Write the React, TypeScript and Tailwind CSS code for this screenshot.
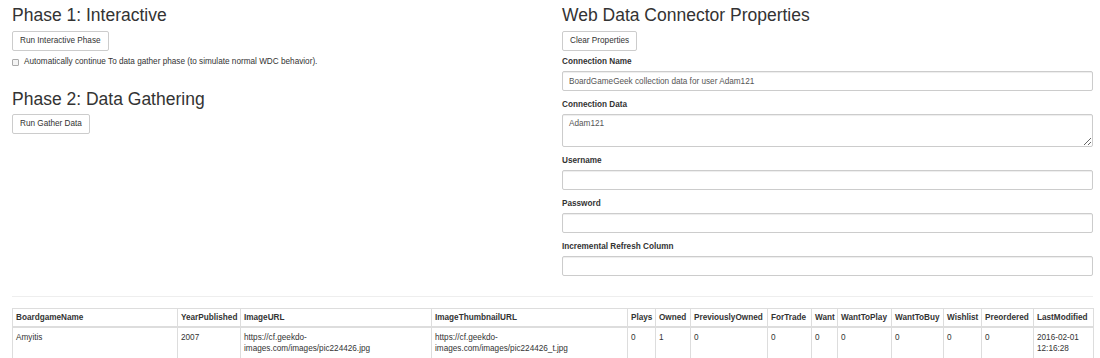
const columns = [
  { name: 'BoardgameName', w: 'w-[165px]' },
  { name: 'YearPublished', w: 'w-[63px]' },
  { name: 'ImageURL', w: 'w-[191px]' },
  { name: 'ImageThumbnailURL', w: 'w-[196px]' },
  { name: 'Plays', w: 'w-[28px]' },
  { name: 'Owned', w: 'w-[35px]' },
  { name: 'PreviouslyOwned', w: 'w-[77px]' },
  { name: 'ForTrade', w: 'w-[44px]' },
  { name: 'Want', w: 'w-[26px]' },
  { name: 'WantToPlay', w: 'w-[54px]' },
  { name: 'WantToBuy', w: 'w-[52px]' },
  { name: 'Wishlist', w: 'w-[38px]' },
  { name: 'Preordered', w: 'w-[52px]' },
  { name: 'LastModified', w: 'w-[60px]' },
];

const row: React.ReactNode[] = [
  'Amyitis',
  '2007',
  <>https://cf.geekdo-<br />images.com/images/pic224426.jpg</>,
  <>https://cf.geekdo-<br />images.com/images/pic224426_t.jpg</>,
  '0',
  '1',
  '0',
  '0',
  '0',
  '0',
  '0',
  '0',
  '0',
  <>2016-02-01<br />12:16:28</>,
];

const fields = [
  { label: 'Connection Name', value: 'BoardGameGeek collection data for user Adam121' },
  { label: 'Connection Data', value: 'Adam121', area: true },
  { label: 'Username', value: '' },
  { label: 'Password', value: '' },
  { label: 'Incremental Refresh Column', value: '' },
];

function Btn({ children }: { children: React.ReactNode }) {
  return (
    <button className="h-[20px] px-[7px] bg-white border border-[#ccc] rounded-[2px] text-[8.2px] leading-[12px] text-[#333]">
      {children}
    </button>
  );
}

export default function App() {
  return (
    <div className="min-h-screen bg-white pl-[12px] pr-[7px] text-[8.2px] text-[#333] font-['Liberation_Sans',Arial,sans-serif]">
      <div className="grid grid-cols-2 gap-[19px]">
        {/* Left: phases */}
        <div>
          <h2 className="mt-[6px] mb-[6px] text-[17.5px] leading-[19px] font-normal">Phase 1: Interactive</h2>
          <Btn>Run Interactive Phase</Btn>
          <label className="mt-[5px] flex items-center gap-[5px] leading-[12px]">
            <span className="w-[7px] h-[7px] border border-[#aaa] rounded-[1px] bg-[#f4f4f4]" />
            Automatically continue To data gather phase (to simulate normal WDC behavior).
          </label>
          <h2 className="mt-[22px] mb-[5px] text-[17.5px] leading-[19px] font-normal">Phase 2: Data Gathering</h2>
          <Btn>Run Gather Data</Btn>
        </div>

        {/* Right: properties */}
        <div>
          <h2 className="mt-[6px] mb-[6px] text-[17.5px] leading-[19px] font-normal">Web Data Connector Properties</h2>
          <Btn>Clear Properties</Btn>
          <div className="mt-[5px] flex flex-col gap-[8px]">
            {fields.map(f => (
              <div key={f.label}>
                <p className="mb-[3px] font-bold leading-[12px]">{f.label}</p>
                {f.area ? (
                  <textarea
                    readOnly
                    defaultValue={f.value}
                    className="block w-full h-[33px] px-[6px] py-[3px] border border-[#ccc] rounded-[2px] text-[8.2px] leading-[12px] text-[#555] shadow-[inset_0_1px_1px_rgba(0,0,0,0.075)] outline-none"
                  />
                ) : (
                  <input
                    readOnly
                    defaultValue={f.value}
                    className="block w-full h-[20px] px-[6px] border border-[#ccc] rounded-[2px] text-[8.2px] text-[#555] shadow-[inset_0_1px_1px_rgba(0,0,0,0.075)] outline-none"
                  />
                )}
              </div>
            ))}
          </div>
        </div>
      </div>

      <hr className="mt-[20px] mb-[11px] border-t border-[#eee]" />

      {/* Data table */}
      <table className="w-full table-fixed border-collapse border border-[#ddd]">
        <colgroup>
          {columns.map(c => <col key={c.name} className={c.w} />)}
        </colgroup>
        <thead>
          <tr>
            {columns.map(c => (
              <th key={c.name} className="px-[3px] py-[3px] text-left font-bold leading-[11px] border border-[#ddd] border-b-2 whitespace-nowrap">
                {c.name}
              </th>
            ))}
          </tr>
        </thead>
        <tbody>
          <tr>
            {row.map((cell, i) => (
              <td key={i} className="px-[3px] py-[4px] align-top leading-[11px] border border-[#ddd]">
                {cell}
              </td>
            ))}
          </tr>
        </tbody>
      </table>
    </div>
  );
}
